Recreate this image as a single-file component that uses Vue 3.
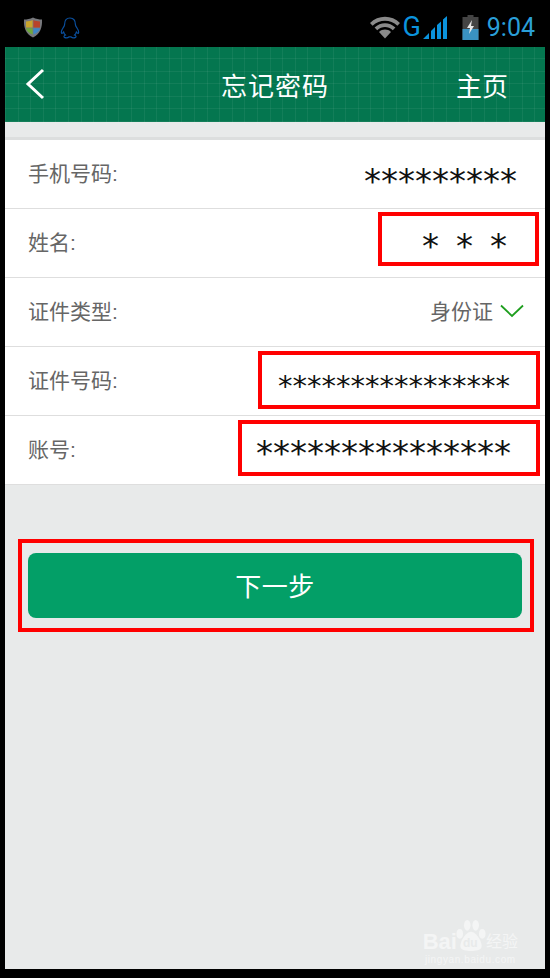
<template>
  <div class="screen">
    <div class="status-bar">
      <svg class="shield" width="20" height="21" viewBox="0 0 20 21">
        <path d="M10 0.5 C7 2 4 2.6 1 2.6 C0.6 10 2.5 17 10 20.5 C17.5 17 19.4 10 19 2.6 C16 2.6 13 2 10 0.5Z" fill="#77787c" />
        <path d="M9.6 3 C7.5 4 5.5 4.4 3 4.5 L3 10.5 L9.6 10.5Z" fill="#c9a52c" />
        <path d="M10.4 3 C12.5 4 14.5 4.4 17 4.5 L17 10.5 L10.4 10.5Z" fill="#b8432a" />
        <path d="M3 11.3 L9.6 11.3 L9.6 17.6 C5.6 16 3.6 14 3 11.3Z" fill="#6fa83c" />
        <path d="M10.4 11.3 L17 11.3 C16.4 14 14.4 16 10.4 17.6Z" fill="#3f86c6" />
      </svg>
      <svg class="penguin" width="20" height="22" viewBox="0 0 20 22">
        <path d="M10 1 C6.2 1 4.6 4 4.6 7.4 C4.6 8.8 4 9.6 3 11 C1.6 13 1 15 1.6 16.2 C2.2 16.6 3 15.8 3.6 15 C4 16.4 4.6 17.4 5.4 18 C4 18.6 3.6 19.6 4.4 20.4 C5.8 21 8 20.8 9.2 19.8 L10.8 19.8 C12 20.8 14.2 21 15.6 20.4 C16.4 19.6 16 18.6 14.6 18 C15.4 17.4 16 16.4 16.4 15 C17 15.8 17.8 16.6 18.4 16.2 C19 15 18.4 13 17 11 C16 9.6 15.4 8.8 15.4 7.4 C15.4 4 13.8 1 10 1Z" fill="none" stroke="#0a4f9e" stroke-width="1.2" />
      </svg>
      <div class="status-right">
        <svg class="wifi" width="30" height="23" viewBox="0 0 30 23">
          <path d="M0 7 C8 -1.5 22 -1.5 30 7 L27.4 9.8 C20.4 3 9.6 3 2.6 9.8Z" fill="#8a8a8a" />
          <path d="M4.6 11.6 C10.6 5.8 19.4 5.8 25.4 11.6 L22.8 14.2 C18 9.8 12 9.8 7.2 14.2Z" fill="#8a8a8a" />
          <path d="M9 16 C12.6 12.8 17.4 12.8 21 16 L15 22.6Z" fill="#8a8a8a" />
        </svg>
        <span class="net">G</span>
        <svg class="signal" width="24" height="23" viewBox="0 0 24 23">
          <path d="M0 23 L6 17 L6 23Z M8 15 L12 11 L12 23 L8 23Z M14 9 L18 5.500 L18 23 L14 23Z M20 3.500 L24 0 L24 23 L20 23Z" fill="#0b93dd" />
        </svg>
        <svg class="battery" width="16" height="25" viewBox="0 0 16 25">
          <path d="M5 0 L11 0 L11 2 L16 2 L16 25 L0 25 L0 2 L5 2Z" fill="#444" />
          <rect y="14" width="16" height="11" fill="#3a92c2" />
          <path d="M9.500 5 L4.500 13 L7.500 13 L6.500 19 L11.500 11 L8.500 11Z" fill="#e8e8e8" />
        </svg>
        <span class="clock">9:04</span>
      </div>
    </div>

    <div class="page">
      <header class="top-bar">
        <svg class="back" width="20" height="32" viewBox="0 0 20 32">
          <path d="M18 2 L3 16 L18 30" fill="none" stroke="#fff" stroke-width="3" />
        </svg>
        <h1 class="title">忘记密码</h1>
        <span class="home">主页</span>
      </header>

      <div class="gap-strip" />

      <section class="form">
        <div v-for="row in rows" :key="row.label" class="row">
          <span class="label">{{ row.label }}</span>
          <span v-if="row.select" class="select">
            {{ row.value }}
            <svg width="24" height="14" viewBox="0 0 24 14">
              <path d="M1 1.500 L12 12 L23 1.500" fill="none" stroke="#1e9e1e" stroke-width="1.800" />
            </svg>
          </span>
          <span v-else class="mask" :class="`mask--${row.kind}`">{{ row.value }}</span>
        </div>
      </section>

      <div class="action">
        <button class="next">下一步</button>
      </div>

      <div class="watermark">
        <div class="wm-main">
          <span>Bai</span>
          <span class="wm-paw">
            <svg width="30" height="32" viewBox="0 0 32 30" preserveAspectRatio="none">
              <ellipse cx="12" cy="5" rx="3.500" ry="5" fill="#f4f5f5" />
              <ellipse cx="21" cy="5" rx="3.500" ry="5" fill="#f4f5f5" />
              <ellipse cx="4" cy="13" rx="3.500" ry="4.500" fill="#f4f5f5" />
              <ellipse cx="28" cy="13" rx="3.500" ry="4.500" fill="#f4f5f5" />
              <path d="M16 11 C10 11 3 22 5 26 C7 30 25 30 27 26 C29 22 22 11 16 11Z" fill="#f4f5f5" />
            </svg>
            <span class="wm-du">du</span>
          </span>
          <span class="wm-cn">经验</span>
        </div>
        <div class="wm-sub">jingyan.baidu.com</div>
      </div>

      <div class="mark mark--name" />
      <div class="mark mark--id" />
      <div class="mark mark--account" />
      <div class="mark mark--next" />
    </div>
  </div>
</template>

<script setup>
const rows = [
  { label: '手机号码:', value: '*********', kind: 'phone' },
  { label: '姓名:', value: '***', kind: 'name' },
  { label: '证件类型:', value: '身份证', select: true },
  { label: '证件号码:', value: '****************', kind: 'id' },
  { label: '账号:', value: '***************', kind: 'account' },
]
</script>

<style>
html, body {
  margin: 0;
  background: #000;
}
</style>

<style scoped>
.screen {
  width: 550px;
  height: 978px;
  background: #000;
  display: flex;
  flex-direction: column;
  overflow: hidden;
  font-family: "Liberation Sans", "Noto Sans CJK SC", sans-serif;
}

.status-bar {
  height: 47px;
  flex-shrink: 0;
  display: flex;
  align-items: center;
  padding: 0 15px 0 23px;
  box-sizing: border-box;
}

.shield { margin-top: 8px; }
.penguin { margin: 9px 0 0 17px; }

.status-right {
  margin-left: auto;
  display: flex;
  align-items: center;
  padding-top: 8px;
}

.net {
  font-family: Roboto, sans-serif;
  font-size: 27px;
  color: #0b93dd;
  margin-left: 2px;
  line-height: 25px;
}

.signal { margin-left: 2px; }
.battery { margin: 0 0 0 15px; width: 17px; }

.clock {
  font-family: Roboto, sans-serif;
  font-size: 25px;
  color: #2a9fd8;
  margin-left: 8px;
  line-height: 25px;
}

.page {
  position: relative;
  width: 540px;
  height: 922px;
  margin-left: 5px;
  background: #e8eaea;
}

.top-bar {
  height: 75px;
  box-sizing: border-box;
  padding: 0 37px 0 20px;
  display: grid;
  grid-template-columns: 1fr auto 1fr;
  align-items: center;
  color: #fff;
  background-color: #04764f;
  background-image:
    repeating-linear-gradient(90deg, rgba(255,255,255,0.06) 0 1px, transparent 1px 12.6px),
    repeating-linear-gradient(0deg, rgba(255,255,255,0.06) 0 1px, transparent 1px 12.6px);
}

.back { margin-top: -1px; }

.title {
  margin: 0 0 0 17px;
  font-size: 26px;
  font-weight: 400;
  letter-spacing: 1px;
}

.home {
  font-size: 26px;
  justify-self: end;
}

.gap-strip {
  height: 15px;
  border-bottom: 3px solid #dcdede;
}

.form {
  background: #fff;
}

.row {
  height: 69px;
  box-sizing: border-box;
  border-bottom: 1px solid #dedede;
  display: flex;
  align-items: center;
  justify-content: space-between;
  padding: 0 21px 5px 23px;
}

.label {
  font-size: 21px;
  color: #666;
}

.select {
  display: flex;
  align-items: center;
  gap: 7px;
  font-size: 21px;
  color: #666;
}

.select svg { margin-top: 3px; }

.mask {
  font-family: "DejaVu Sans", sans-serif;
  color: #111;
  line-height: 1;
}

.mask--phone {
  font-size: 34px;
  margin-right: 7px;
  transform: translateY(9px);
}

.mask--name {
  font-size: 34px;
  letter-spacing: 17px;
  margin-right: 0;
  transform: translateY(5px);
}

.mask--id {
  font-size: 29px;
  margin-right: 14px;
  transform: translateY(8px);
}

.mask--account {
  font-size: 34px;
  margin-right: 13px;
  transform: translateY(5px);
}

.action {
  padding: 68px 23px 0;
}

.next {
  display: block;
  width: 100%;
  height: 65px;
  padding: 0 0 3px;
  border: none;
  border-radius: 8px;
  background: #039f67;
  color: #fff;
  font-family: inherit;
  font-size: 26px;
  letter-spacing: 0.5px;
}

.watermark {
  position: absolute;
  right: 27px;
  bottom: 1px;
  color: #f4f5f5;
  text-align: center;
}

.wm-main {
  display: flex;
  align-items: flex-end;
  justify-content: center;
  font-size: 22px;
  font-weight: 700;
  line-height: 20px;
}

.wm-paw {
  position: relative;
  display: block;
  height: 32px;
  margin: 0 -1px;
}

.wm-du {
  position: absolute;
  left: 7px;
  bottom: 2px;
  font-size: 12px;
  line-height: 14px;
  color: #e8eaea;
}

.wm-cn {
  font-size: 16px;
  font-weight: 400;
  line-height: 20px;
  margin-left: 1px;
}

.wm-sub {
  font-size: 10px;
  letter-spacing: 0.6px;
  line-height: 16px;
}

.mark {
  position: absolute;
  box-sizing: border-box;
  border: 4px solid #f00;
}

.mark--name { left: 373px; top: 165px; width: 161px; height: 54px; }
.mark--id { left: 253px; top: 304px; width: 282px; height: 58px; }
.mark--account { left: 233px; top: 373px; width: 302px; height: 56px; }
.mark--next { left: 13px; top: 492px; width: 516px; height: 93px; }
</style>
